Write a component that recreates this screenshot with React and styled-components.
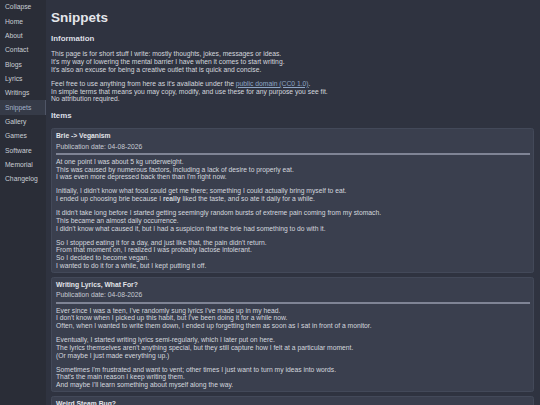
import React from "react";
import styled, { createGlobalStyle } from "styled-components";

const Global = createGlobalStyle`
  html, body { margin: 0; padding: 0; overflow: hidden; background: #2f3340; }
  body { font-family: "Liberation Sans", Arial, sans-serif; font-size: 6.75px; line-height: 1.15; color: #d4d7de; }
  * { box-sizing: border-box; }
`;

const Layout = styled.div`
  display: flex;
  height: 405px;
  overflow: hidden;
`;

const Sidebar = styled.nav`
  width: 46px;
  flex: none;
  background: #2a2d37;
  display: flex;
  flex-direction: column;
`;

const NavItem = styled.div`
  height: 14.35px;
  padding: 0 0 0 5px;
  display: flex;
  align-items: center;
  color: ${(p) => (p.$active ? "#a3b2c8" : "#c9cdd5")};
  background: ${(p) => (p.$active ? "#363b48" : "transparent")};
  border-right: 1px solid ${(p) => (p.$active ? "#4f5566" : "transparent")};
  white-space: nowrap;
`;

const Main = styled.main`
  flex: 1;
  padding: 9.5px 6px 0 5px;
  overflow: hidden;
`;

const Title = styled.h1`
  margin: 0;
  font-size: 13.5px;
  font-weight: bold;
  color: #e4e6eb;
  line-height: 15.5px;
`;

const Heading = styled.h3`
  margin: ${(p) => p.$mt}px 0 0 0;
  font-size: 7.9px;
  font-weight: bold;
  color: #dcdfe5;
  line-height: 9.1px;
`;

const Para = styled.p`
  margin: ${(p) => p.$mt ?? 6.25}px 0 0 0;
`;

const Link = styled.a`
  color: #8ea6c6;
  text-decoration: underline;
`;

const Cards = styled.div`
  margin-top: 7.5px;
  display: flex;
  flex-direction: column;
  gap: 4px;
`;

const Card = styled.section`
  background: #3a3f4e;
  border: 1px solid #434959;
  border-radius: 2.5px;
  padding: 3px 3px 2px 4px;
`;

const CardTitle = styled.div`
  font-weight: bold;
  color: #e2e4e9;
`;

const PubDate = styled.div`
  margin-top: 3px;
  color: #c7cbd3;
`;

const Rule = styled.hr`
  margin: 2.5px 0 0 0;
  border: none;
  height: 2px;
  background: #7f8495;
`;

const Body = styled.div`
  margin-top: 3px;
  & > p:first-child { margin-top: 0; }
`;

const nav = ["Collapse", "Home", "About", "Contact", "Blogs", "Lyrics", "Writings", "Snippets", "Gallery", "Games", "Software", "Memorial", "Changelog"];

const Lines = ({ lines }) => (
  <Para>
    {lines.map((l, i) => (
      <React.Fragment key={i}>
        {i > 0 && <br />}
        {l}
      </React.Fragment>
    ))}
  </Para>
);

const items = [
  {
    title: "Brie -> Veganism",
    paras: [
      ["At one point I was about 5 kg underweight.", "This was caused by numerous factors, including a lack of desire to properly eat.", "I was even more depressed back then than I'm right now."],
      ["Initially, I didn't know what food could get me there; something I could actually bring myself to eat.", <>I ended up choosing brie because I <b>really</b> liked the taste, and so ate it daily for a while.</>],
      ["It didn't take long before I started getting seemingly random bursts of extreme pain coming from my stomach.", "This became an almost daily occurrence.", "I didn't know what caused it, but I had a suspicion that the brie had something to do with it."],
      ["So I stopped eating it for a day, and just like that, the pain didn't return.", "From that moment on, I realized I was probably lactose intolerant.", "So I decided to become vegan.", "I wanted to do it for a while, but I kept putting it off."],
    ],
  },
  {
    title: "Writing Lyrics, What For?",
    paras: [
      ["Ever since I was a teen, I've randomly sung lyrics I've made up in my head.", "I don't know when I picked up this habit, but I've been doing it for a while now.", "Often, when I wanted to write them down, I ended up forgetting them as soon as I sat in front of a monitor."],
      ["Eventually, I started writing lyrics semi-regularly, which I later put on here.", "The lyrics themselves aren't anything special, but they still capture how I felt at a particular moment.", "(Or maybe I just made everything up.)"],
      ["Sometimes I'm frustrated and want to vent; other times I just want to turn my ideas into words.", "That's the main reason I keep writing them.", "And maybe I'll learn something about myself along the way."],
    ],
  },
  {
    title: "Weird Steam Bug?",
    paras: [
      ["Publication date placeholder"],
    ],
  },
];

export default function App() {
  return (
    <>
      <Global />
      <Layout>
        <Sidebar>
          {nav.map((n) => (
            <NavItem key={n} $active={n === "Snippets"}>{n}</NavItem>
          ))}
        </Sidebar>
        <Main>
          <Title>Snippets</Title>
          <Heading $mt={9}>Information</Heading>
          <Para $mt={7.3}>
            This page is for short stuff I write: mostly thoughts, jokes, messages or ideas.<br />
            It's my way of lowering the mental barrier I have when it comes to start writing.<br />
            It's also an excuse for being a creative outlet that is quick and concise.
          </Para>
          <Para>
            Feel free to use anything from here as it's available under the <Link href="#">public domain (CC0 1.0)</Link>.<br />
            In simple terms that means you may copy, modify, and use these for any purpose you see fit.<br />
            No attribution required.
          </Para>
          <Heading $mt={8.2}>Items</Heading>
          <Cards>
            {items.map((it, idx) => (
              <Card key={it.title}>
                <CardTitle>{it.title}</CardTitle>
                <PubDate>Publication date: 04-08-2026</PubDate>
                <Rule />
                <Body>
                  {idx < 2 && it.paras.map((p, i) => <Lines key={i} lines={p} />)}
                </Body>
              </Card>
            ))}
          </Cards>
        </Main>
      </Layout>
    </>
  );
}
